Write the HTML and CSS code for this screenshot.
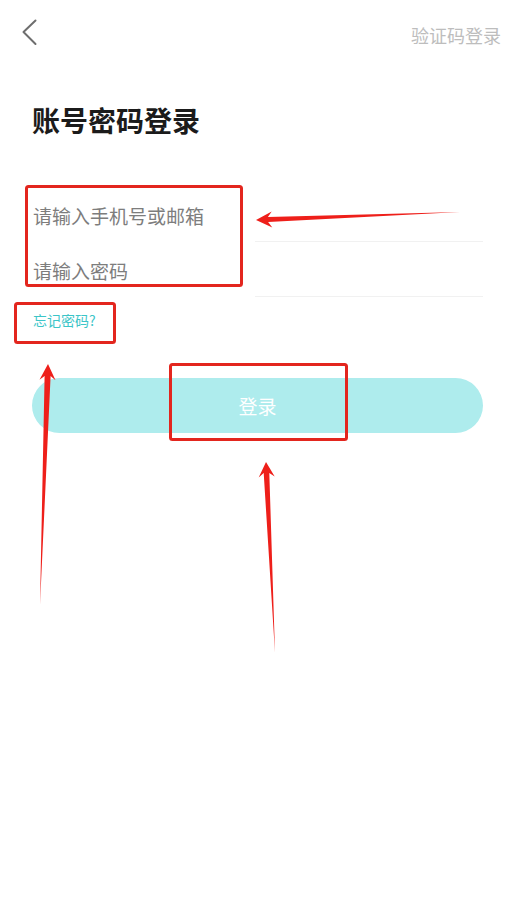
FILE: index.html
```html
<!DOCTYPE html>
<html>
<head>
    <meta charset="utf-8" />
    <title>账号密码登录</title>
    <link rel="stylesheet" href="styles.css">
</head>
<body>
    <div class="page">
        <div class="topbar">
            <svg class="back" width="16" height="28" viewBox="0 0 16 28">
                <polyline points="13.5,1.5 1.5,13 13.5,25" fill="none" stroke="#6e6e6e" stroke-width="2" stroke-linecap="round" stroke-linejoin="round" />
            </svg>
            <span class="switch">验证码登录</span>
        </div>

        <h1 class="title">账号密码登录</h1>

        <form class="form">
            <div class="field">
                <input class="input" type="text" placeholder="请输入手机号或邮箱" />
            </div>
            <div class="field">
                <input class="input" type="password" placeholder="请输入密码" />
            </div>
            <a class="forgot" href="#">忘记密码?</a>
            <button class="login" type="button">登录</button>
        </form>

        <!-- annotation layer -->
        <svg class="marks" width="516" height="899" viewBox="0 0 516 899">
            <g fill="none" stroke="#e3261e" stroke-width="3">
                <rect x="26.5" y="186.5" width="215" height="99" rx="2" />
                <rect x="15.5" y="303.5" width="99" height="39" rx="2" />
                <rect x="170.5" y="364.5" width="176" height="75" rx="2" />
            </g>
            <g fill="#ee1f1a">
                <polygon points="256,220 271.7,211.4 267.9,217.0 460,212 268.1,222.0 272.3,227.4" />
                <polygon points="48,364 55.5,380.3 50.6,376.1 40,605 44.6,375.9 39.5,379.7" />
                <polygon points="266,462 274.7,476.6 269.3,472.9 275,653 263.7,473.1 258.7,477.4" />
            </g>
        </svg>
    </div>
</body>
</html>
```

FILE: styles.css
```css
* {
    box-sizing: border-box;
}

html {
    padding: 0px;
    margin: 0px;
    font-family: "Noto Sans CJK SC", "Noto Sans", sans-serif;
}

body {
    background-color: #ffffff;
    padding: 0px;
    margin: 0px;
}

.page {
    position: relative;
    width: 516px;
    height: 899px;
    overflow: hidden;
}

.topbar {
    display: flex;
    justify-content: space-between;
    align-items: center;
    height: 66px;
    padding: 0 15px 0 22px;
}

.back {
    display: block;
}

.switch {
    font-size: 18px;
    color: #bdbdbd;
    padding-top: 3px;
}

.title {
    margin: 34px 0 0 0;
    padding: 0 32px;
    font-size: 28px;
    font-weight: 700;
    line-height: 40px;
    color: #1b1b1b;
}

.form {
    display: flex;
    flex-direction: column;
    margin-top: 47px;
    padding: 0 33px 0 32px;
}

.field {
    position: relative;
    height: 55px;
    display: flex;
    align-items: center;
    padding-top: 2px;
}

.field::after {
    content: "";
    position: absolute;
    left: 223px;
    right: 0;
    bottom: 0;
    height: 1px;
    background-color: #f1f1f1;
}

.input {
    width: 100%;
    border: none;
    outline: none;
    padding: 0 0 0 1px;
    font-family: inherit;
    font-size: 19px;
    background: transparent;
}

.input::placeholder {
    color: #7d7d7d;
}

.forgot {
    align-self: flex-start;
    margin-top: 13px;
    padding-left: 1px;
    font-size: 14px;
    line-height: 20px;
    color: #3cc5c8;
    text-decoration: none;
}

.login {
    margin-top: 48px;
    height: 55px;
    border: none;
    border-radius: 28px;
    background-color: #aeeced;
    color: #ffffff;
    font-family: inherit;
    font-size: 19px;
}

.marks {
    position: absolute;
    top: 0;
    left: 0;
    pointer-events: none;
}
```
